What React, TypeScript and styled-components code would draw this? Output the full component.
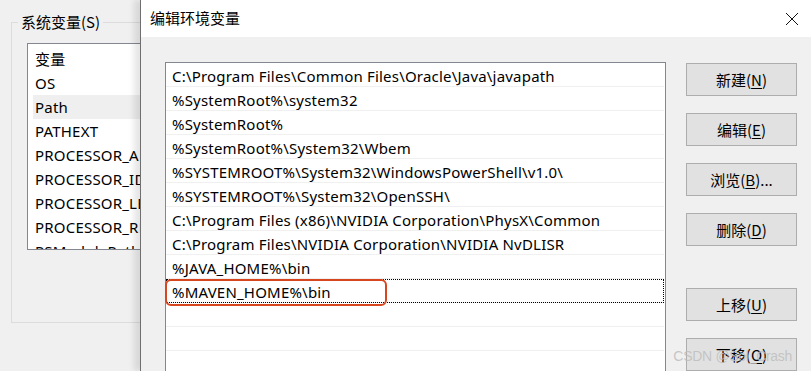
import React from "react";
import styled, { createGlobalStyle } from "styled-components";

const Global = createGlobalStyle`
  html, body { margin: 0; padding: 0; background: #f0f0f0; }
  body { font-family: "Noto Sans CJK SC", "Noto Sans", sans-serif; }
`;

const FONT = `"Segoe UI", "Noto Sans", "Noto Sans CJK SC", sans-serif`;

const Screen = styled.div`
  position: relative;
  width: 811px;
  height: 371px;
  overflow: hidden;
  display: flex;
  background: #f0f0f0;
  font-family: ${FONT};
  font-size: 15px;
  color: #000;
`;

const BackWindow = styled.div`
  width: 140px;
  flex: none;
  overflow: hidden;
  padding: 22px 0 0 11px;
  box-sizing: border-box;
`;

const GroupBox = styled.div`
  position: relative;
  width: 400px;
  height: 301px;
  box-sizing: border-box;
  border: 1px solid #dcdcdc;
  padding: 20px 0 0 15px;
`;

const GroupLegend = styled.div`
  position: absolute;
  top: -12px;
  left: 6px;
  padding: 0 3px;
  background: #f0f0f0;
  line-height: 22px;
  font-family: "Noto Sans CJK SC", sans-serif;
  font-size: 15px;
`;

const VarList = styled.div`
  width: 300px;
  height: 207px;
  box-sizing: border-box;
  border: 1px solid #828790;
  background: #fff;
  padding: 3px 0 0 5px;
  overflow: hidden;
`;

const VarRow = styled.div<{ $sel?: boolean }>`
  height: 24px;
  line-height: 25px;
  padding-left: 2px;
  letter-spacing: 0.2px;
  background: ${(p) => (p.$sel ? "#efefef" : "transparent")};
  white-space: nowrap;
  font-family: ${FONT};
`;

const Dialog = styled.div`
  flex: 1;
  display: flex;
  flex-direction: column;
  border-left: 1px solid #6f6f6f;
  box-shadow: -6px 0 6px rgba(0, 0, 0, 0.1);
  background: #f0f0f0;
  z-index: 1;
`;

const TitleBar = styled.div`
  height: 37px;
  flex: none;
  background: #fff;
  display: flex;
  align-items: center;
  justify-content: space-between;
  padding: 0 10px 0 9px;
`;

const Title = styled.div`
  font-family: "Noto Sans CJK SC", sans-serif;
  font-size: 15px;
  line-height: 20px;
  margin-top: -1px;
`;

const CloseIcon = styled.svg`
  width: 14px;
  height: 14px;
  margin-right: 2px;
`;

const Body = styled.div`
  flex: 1;
  display: flex;
  gap: 20px;
  padding: 25px 0 0 24px;
`;

const PathList = styled.div`
  width: 501px;
  height: 330px;
  box-sizing: border-box;
  border: 1px solid #828790;
  border-bottom: none;
  background: #fff;
  flex: none;
`;

const PathRow = styled.div<{ $focus?: boolean }>`
  position: relative;
  height: 24px;
  box-sizing: border-box;
  line-height: 26px;
  padding-left: 6px;
  margin-right: 1px;
  letter-spacing: 0.2px;
  white-space: nowrap;
  border-bottom: 1px solid #f0f0f0;
  outline: ${(p) => (p.$focus ? "1px dotted #000" : "none")};
  outline-offset: -1px;
`;

const Highlight = styled.div`
  position: absolute;
  left: -1px;
  top: 0px;
  width: 222px;
  height: 27px;
  box-sizing: border-box;
  border: 2px solid #d8461f;
  border-radius: 6px;
`;

const Buttons = styled.div`
  display: flex;
  flex-direction: column;
  gap: 17px;
  padding-top: 1px;
`;

const Button = styled.div<{ $gapBefore?: number }>`
  width: 111px;
  height: 33px;
  box-sizing: border-box;
  border: 1px solid #adadad;
  background: #e1e1e1;
  display: flex;
  align-items: center;
  justify-content: center;
  font-family: "Noto Sans CJK SC", sans-serif;
  font-size: 15px;
  margin-top: ${(p) => p.$gapBefore ?? 0}px;
  u { text-underline-offset: 2px; }
`;

const Watermark = styled.div`
  position: absolute;
  right: 19px;
  bottom: 7px;
  color: rgba(190, 190, 190, 0.85);
  font-family: "Liberation Sans", sans-serif;
  font-size: 14px;
  letter-spacing: -0.3px;
  z-index: 5;
  pointer-events: none;
`;

const vars = [
  "变量",
  "OS",
  "Path",
  "PATHEXT",
  "PROCESSOR_ARCHITECTURE",
  "PROCESSOR_IDENTIFIER",
  "PROCESSOR_LEVEL",
  "PROCESSOR_REVISION",
  "PSModulePath",
];

const paths = [
  "C:\\Program Files\\Common Files\\Oracle\\Java\\javapath",
  "%SystemRoot%\\system32",
  "%SystemRoot%",
  "%SystemRoot%\\System32\\Wbem",
  "%SYSTEMROOT%\\System32\\WindowsPowerShell\\v1.0\\",
  "%SYSTEMROOT%\\System32\\OpenSSH\\",
  "C:\\Program Files (x86)\\NVIDIA Corporation\\PhysX\\Common",
  "C:\\Program Files\\NVIDIA Corporation\\NVIDIA NvDLISR",
  "%JAVA_HOME%\\bin",
  "%MAVEN_HOME%\\bin",
  "",
  "",
  "",
];

const buttons: { label: string; key: string; suffix?: string; gap?: number }[] = [
  { label: "新建", key: "N" },
  { label: "编辑", key: "E" },
  { label: "浏览", key: "B", suffix: "..." },
  { label: "删除", key: "D" },
  { label: "上移", key: "U", gap: 25 },
  { label: "下移", key: "O" },
];

export default function App() {
  return (
    <Screen>
      <Global />
      <BackWindow>
        <GroupBox>
          <GroupLegend>系统变量(S)</GroupLegend>
          <VarList>
            {vars.map((v) => (
              <VarRow key={v} $sel={v === "Path"}>
                {v}
              </VarRow>
            ))}
          </VarList>
        </GroupBox>
      </BackWindow>
      <Dialog>
        <TitleBar>
          <Title>编辑环境变量</Title>
          <CloseIcon viewBox="0 0 14 14">
            <path d="M1 1 L13 13 M13 1 L1 13" stroke="#111" strokeWidth="1" fill="none" />
          </CloseIcon>
        </TitleBar>
        <Body>
          <PathList>
            {paths.map((p, i) => (
              <PathRow key={i} $focus={i === 9}>
                {p || "\u00a0"}
                {i === 9 && <Highlight />}
              </PathRow>
            ))}
          </PathList>
          <Buttons>
            {buttons.map((b) => (
              <Button key={b.key} $gapBefore={b.gap}>
                {b.label}(<u>{b.key}</u>){b.suffix}
              </Button>
            ))}
          </Buttons>
        </Body>
      </Dialog>
      <Watermark>CSDN @Sol_Crash</Watermark>
    </Screen>
  );
}
